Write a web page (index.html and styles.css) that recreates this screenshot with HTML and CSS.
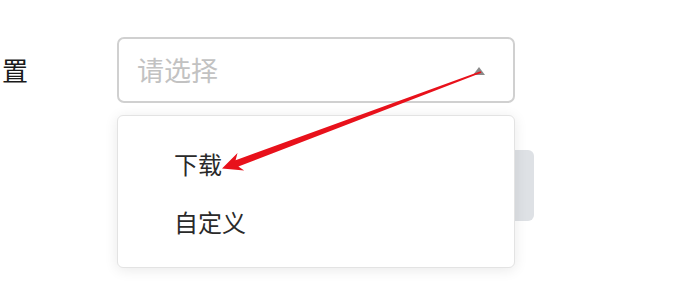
FILE: index.html
```html
<!DOCTYPE html>
<html lang="zh">
<head>
<meta charset="utf-8">
<link rel="stylesheet" href="styles.css">
</head>
<body>
<div class="page">
  <div class="label">置</div>
  <div class="field">
    <div class="select">
      <span class="placeholder">请选择</span>
      <span class="caret"></span>
    </div>
    <div class="dropdown">
      <div class="item">下载</div>
      <div class="item">自定义</div>
    </div>
  </div>
  <div class="behind"></div>
</div>
<svg class="arrow" width="698" height="282" viewBox="0 0 698 282">
  <polygon fill="#e8111b" points="222,168.5 237.5,153 235.6,160.2 480.6,71.2 481.4,72.8 238.4,166.6 244.2,170.6"/>
</svg>
</body>
</html>
```
FILE: styles.css
```css
html, body {
  margin: 0;
  padding: 0;
  background: #fff;
  width: 698px;
  height: 282px;
  overflow: hidden;
}
.page {
  position: relative;
  display: flex;
  align-items: flex-start;
  padding-top: 37px;
  font-family: "Noto Sans CJK SC", "Noto Sans", sans-serif;
}
.label {
  width: 115px;
  padding-left: 2px;
  height: 66px;
  line-height: 66px;
  font-size: 26px;
  color: #1a1a1a;
}
.field {
  width: 398px;
  position: relative;
  z-index: 1;
}
.select {
  box-sizing: border-box;
  height: 66px;
  border: 2px solid #d0d0d0;
  border-radius: 7px;
  display: flex;
  align-items: center;
  padding-left: 18px;
  padding-right: 28px;
  background: #fff;
}
.placeholder {
  font-size: 27px;
  color: #c2c2c2;
  line-height: 1;
  margin-top: -2px;
}
.caret {
  margin-left: auto;
  width: 0;
  height: 0;
  border-left: 6px solid transparent;
  border-right: 6px solid transparent;
  border-bottom: 8px solid #8a8a8a;
  margin-top: 2px;
}
.dropdown {
  box-sizing: border-box;
  margin-top: 12px;
  height: 153px;
  border: 1px solid #e3e3e3;
  border-radius: 6px;
  background: #fff;
  box-shadow: 0 2px 14px rgba(0, 0, 0, 0.09);
  padding-top: 19px;
}
.item {
  height: 58px;
  line-height: 58px;
  padding-left: 56px;
  font-size: 24px;
  color: #2a2a2a;
}
.behind {
  position: absolute;
  left: 440px;
  top: 150px;
  width: 94px;
  height: 71px;
  border-radius: 6px;
  background: #dee1e5;
  z-index: 0;
}
.arrow {
  position: absolute;
  left: 0;
  top: 0;
  z-index: 2;
}
```
